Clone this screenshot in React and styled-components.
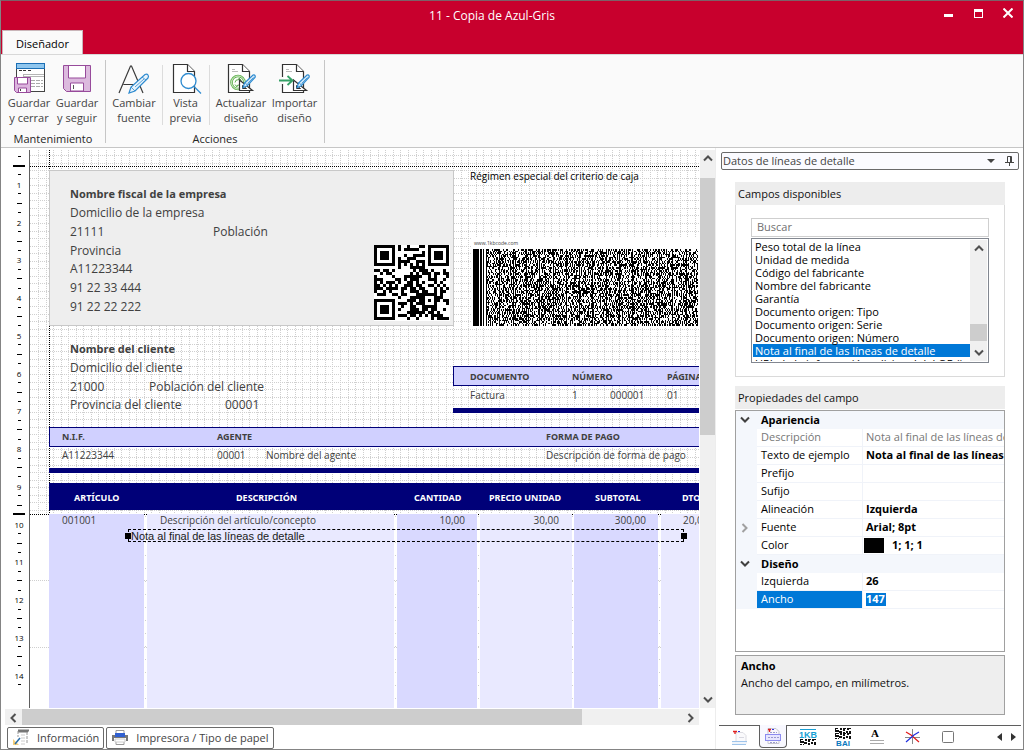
import React from "react";
import styled, { createGlobalStyle, css } from "styled-components";

const UI = '"Open Sans", "Noto Sans", sans-serif';
const NAVY = "#000078";

const Global = createGlobalStyle`
  *, *::before, *::after { box-sizing: border-box; }
  body { margin: 0; background: #fff; font: 11px/15px ${UI}; color: #1c1c1c; }
  button, input, select { font: inherit; color: inherit; margin: 0; padding: 0; border: 0; background: none; border-radius: 0; }
  svg { display: block; }
`;

const Window = styled.div`
  display: flex;
  flex-direction: column;
  height: 100vh;
  min-height: 600px;
  border: 1px solid #848484;
  border-top-color: #7d6068;
  background: #fff;
`;

/* Title bar */
const TitleBar = styled.header`
  display: flex;
  align-items: center;
  height: 29px;
  padding-left: 50px;
  background: #c8002d;
  color: #fff;
`;
const Title = styled.h1`
  flex: 1;
  margin: 0;
  font-size: 12px;
  font-weight: 400;
  text-align: center;
`;
const WindowButton = styled.button`
  display: grid;
  place-items: center;
  width: 30px;
  height: 24px;
  align-self: flex-start;
`;
const TabStrip = styled.nav`
  display: flex;
  height: 24px;
  padding-left: 1px;
  background: #c8002d;
`;
const RibbonTab = styled.button`
  width: 81px;
  height: 25px;
  background: #fafafa;
  border: 1px solid #c9b5b9;
  border-bottom: 0;
  color: #000;
`;

/* Ribbon */
const Ribbon = styled.section`
  display: flex;
  flex: none;
  height: 94px;
  padding: 5px 0 4px 4px;
  background: #fafafa;
  border-top: 1px solid #d8d8d8;
  border-bottom: 1px solid #c6c6c6;
`;
const RibbonGroup = styled.div`
  display: flex;
  flex-direction: column;
  justify-content: space-between;
  padding-right: 4px;
  padding-left: ${(p) => (p.$inset ? "4px" : "0")};
  border-right: 1px solid #c6c6c6;
`;
const RibbonButtons = styled.div`
  display: flex;
  padding-top: 2px;
`;
const GroupName = styled.div`
  text-align: center;
  line-height: 8px;
  color: #262626;
`;
const ToolButton = styled.button`
  display: flex;
  flex-direction: column;
  align-items: center;
  width: ${(p) => p.$width}px;
  color: #444;
  white-space: nowrap;
`;
const ToolLabel = styled.span`
  padding-top: 1px;
  white-space: pre-line;
  text-align: center;
`;
const ToolDivider = styled.span`
  width: 1px;
  height: 60px;
  margin: 3px 3px 0 4px;
  background: #dcdcdc;
`;

/* Main split */
const Workspace = styled.main`
  display: flex;
  flex: 1;
  min-height: 0;
`;
const Designer = styled.section`
  display: flex;
  flex-direction: column;
  flex: 1;
  min-width: 0;
  padding-top: 2px;
`;
const CanvasRow = styled.div`
  display: flex;
  flex: 1;
  min-height: 0;
`;
const RulerBox = styled.div`
  width: 29px;
  overflow: hidden;
  border-right: 1px solid #5f5f5f;
`;
const Canvas = styled.div`
  position: relative;
  flex: 1;
  min-width: 0;
  overflow: hidden;
  background: #fff;
  border-right: 1px solid #fff;
`;
const GridDrawing = styled.svg`
  width: 100%;
  height: 100%;
`;

/* Objects placed on the report canvas */
const Shape = styled.div`
  position: absolute;
  left: ${(p) => p.$x}px;
  top: ${(p) => p.$y}px;
  height: ${(p) => p.$h}px;
  ${(p) => (p.$w ? css`width: ${p.$w}px;` : css`right: 0;`)}
`;
const CompanyBox = styled(Shape)`
  background: #eeeeee;
  border: 1px solid #c8c8c8;
`;
const HeadBand = styled(Shape)`
  background: #d0d0ff;
  border: 1px solid ${NAVY};
  border-right: 0;
`;
const SolidBand = styled(Shape)`
  background: ${NAVY};
`;
const ColumnBand = styled(Shape)`
  height: auto;
  bottom: 0;
  background: ${(p) => (p.$dark ? "#d9d9ff" : "#e9e9ff")};
`;
const Field = styled.span`
  position: absolute;
  top: ${(p) => p.$y - 8}px;
  left: ${(p) => p.$x}px;
  line-height: 16px;
  white-space: nowrap;
  color: #404040;
  font-size: 10px;
`;
const PartyField = styled(Field)`
  font-size: 12px;
`;
const PartyName = styled(Field)`
  font-size: 11px;
  font-weight: 700;
`;
const BandField = styled(Field)`
  font: 700 9px/16px "Noto Sans", sans-serif;
`;
const ColumnTitle = styled(BandField)`
  color: #fff;
`;
const Regime = styled(Field)`
  color: #000;
`;
const Amount = styled(Field)`
  left: ${(p) => p.$x - 60}px;
  width: 60px;
  text-align: right;
`;
const CodeCaption = styled(Field)`
  font-size: 5px;
`;
const CodeDrawing = styled.svg`
  position: absolute;
  left: ${(p) => p.$x}px;
  top: ${(p) => p.$y}px;
`;
const SelectedField = styled.div`
  position: absolute;
  left: 98px;
  top: 379px;
  width: 556px;
  height: 13px;
  padding-left: 2px;
  border: 1px dashed #000;
  font: 11px/12px "Liberation Sans", Arial, sans-serif;
  color: #1a1a1a;
`;
const Handle = styled.i`
  position: absolute;
  top: 3px;
  ${(p) => p.$side}: -4px;
  width: 6px;
  height: 6px;
  background: #000;
`;

/* Scroll bars */
const VBar = styled.div`
  display: flex;
  flex-direction: column;
  width: ${(p) => p.$width}px;
  background: #f0f0f0;
`;
const HBar = styled.div`
  display: flex;
  flex: none;
  height: 17px;
  margin: 0 16px 0 4px;
  background: #f0f0f0;
  border-top: 1px solid #fff;
`;
const ArrowButton = styled.button`
  display: grid;
  place-items: center;
  flex: none;
  min-width: 15px;
  height: 17px;
`;
const SideArrowButton = styled(ArrowButton)`
  width: 17px;
`;
const Track = styled.div`
  display: flex;
  flex: 1;
  flex-direction: ${(p) => (p.$vertical ? "column" : "row")};
`;
const Space = styled.div`
  flex: ${(p) => p.$share} 0 0;
`;
const Thumb = styled.div`
  flex: ${(p) => p.$share} 0 0;
  background: #cdcdcd;
`;

/* Bottom document tabs */
const DocTabs = styled.div`
  display: flex;
  flex: none;
  gap: 2px;
  padding: 2px 0 0 6px;
  height: 24px;
`;
const DocTab = styled.button`
  display: flex;
  align-items: center;
  gap: 8px;
  height: 22px;
  padding: 0 4px 2px 5px;
  border: 1px solid #6a6a6a;
  border-radius: 2px;
  color: #444;
`;

/* Side panel */
const Side = styled.aside`
  display: flex;
  flex-direction: column;
  flex: none;
  width: 308px;
  padding-top: 4px;
  border-left: 1px solid #ededed;
`;
const PanelPicker = styled.div`
  display: flex;
  align-items: center;
  height: 18px;
  margin: 0 4px 12px 5px;
  border: 1px solid #6a6a6a;
  border-radius: 2px;
  background: #fbfbff;
`;
const PanelSelect = styled.select`
  flex: 1;
  height: 16px;
  padding-left: 1px;
  appearance: none;
  color: #444;
  line-height: 16px;
`;
const IconButton = styled.button`
  display: grid;
  place-items: center;
  width: 18px;
  height: 16px;
`;
const PanelBody = styled.div`
  display: flex;
  flex-direction: column;
  flex: 1;
  min-height: 0;
  padding: 0 18px 10px 19px;
`;
const SectionTitle = styled.h2`
  flex: none;
  margin: 0;
  padding-left: 3px;
  font-size: 11px;
  font-weight: 400;
  line-height: 23px;
  color: #111;
  background: #ededed;
`;
const FieldsBox = styled.div`
  display: flex;
  flex-direction: column;
  flex: none;
  gap: 1px;
  padding: 13px 15px;
  margin-bottom: 9px;
  border: 1px solid #dadada;
  border-top: 0;
`;
const SearchBox = styled.input`
  width: 100%;
  height: 19px;
  padding: 0 0 2px 5px;
  border: 1px solid #cfcfcf;
  background: #fff;
  &::placeholder { color: #707070; opacity: 1; }
`;
const ListFrame = styled.div`
  display: flex;
  height: 125px;
  padding: 1px;
  border: 1px solid #828790;
`;
const List = styled.ul`
  flex: 1;
  margin: 0;
  padding: 0;
  overflow: hidden;
  list-style: none;
`;
const ListItem = styled.li`
  height: 13px;
  padding-left: 2px;
  line-height: 13px;
  white-space: nowrap;
  color: ${(p) => (p.$selected ? "#fff" : "#000")};
  background: ${(p) => (p.$selected ? "#0078d7" : "transparent")};
`;
const PropertyFrame = styled.div`
  flex: 1;
  min-height: 0;
  margin: 1px 0 3px;
  overflow: hidden;
  border: 1px solid #a0a0a0;
`;
const PropertyTable = styled.table`
  width: 100%;
  table-layout: fixed;
  border-spacing: 0;
  color: #000;
`;
const Gutter = styled.td`
  width: 21px;
  height: 18px;
  padding: 0 0 0 4px;
  background: #f4f7fc;
`;
const GroupCell = styled.th`
  padding: 0 4px 1px;
  text-align: left;
  line-height: 17px;
  background: #f4f7fc;
`;
const NameCell = styled.th`
  width: 105px;
  height: 18px;
  padding: 0 0 1px 4px;
  text-align: left;
  font-weight: 400;
  line-height: 16px;
  border-bottom: 1px solid #f0f3f9;
  color: ${(p) => (p.$active ? "#fff" : p.$muted ? "#777" : "#000")};
  background: ${(p) => (p.$active ? "#0078d7" : "#fff")};
`;
const ValueCell = styled.td`
  height: 18px;
  padding: 0 0 1px 3px;
  overflow: hidden;
  white-space: nowrap;
  line-height: 16px;
  border-left: 1px solid #f0f3f9;
  border-bottom: 1px solid #f0f3f9;
  font-weight: ${(p) => (p.$muted ? 400 : 700)};
  color: ${(p) => (p.$muted ? "#777" : "#000")};
`;
const ColorValue = styled.span`
  display: flex;
  align-items: center;
  gap: 8px;
  margin-left: -2px;
`;
const Swatch = styled.i`
  width: 20px;
  height: 15px;
  background: #010101;
`;
const ValueInput = styled.input`
  display: block;
  width: 20px;
  height: 13px;
  font-weight: 700;
  color: #fff;
  background: #0078d7;
`;
const HelpBox = styled.div`
  flex: none;
  height: 60px;
  padding: 1px 5px;
  border: 1px solid #a0a0a0;
  background: #eeeeee;
  line-height: 17px;
  color: #111;
`;
const HelpTitle = styled.strong`
  display: block;
  color: #000;
`;
const ToolTabs = styled.div`
  display: flex;
  flex: none;
  height: 24px;
  margin: 0 2px 0 3px;
  padding-left: 3px;
  box-shadow: inset 0 1px #5f5f5f;
`;
const ToolTab = styled.button`
  display: grid;
  place-items: center;
  width: ${(p) => (p.$active ? 28 : 35)}px;
  height: ${(p) => (p.$active ? 23 : 24)}px;
  margin: ${(p) => (p.$active ? "0 3px 0 2px" : "0")};
  ${(p) =>
    p.$active &&
    css`
      background: #f8f8ff;
      border: 1px solid #5f5f5f;
      border-top: 0;
      border-radius: 0 0 4px 4px;
    `}
`;
const TabScroller = styled.div`
  display: flex;
  margin-left: auto;
  padding-right: 1px;
`;
const StepButton = styled.button`
  display: grid;
  place-items: center;
  width: 14px;
  height: 24px;
`;

/* ---------- Drawings ---------- */
const Chevron = ({ dir, color = "#505050" }) => {
  const d = { up: "M1 6.500l4-4 4 4", down: "M1 2.500l4 4 4-4", left: "M6.500 1l-4 4 4 4", right: "M2.500 1l4 4-4 4" }[dir];
  return (
    <svg width="10" height="10" viewBox="0 0 10 10" fill="none" stroke={color} strokeWidth="2" aria-hidden="true">
      <path d={d} />
    </svg>
  );
};

const Pencil = () => (
  <>
    <path d="M14.500 18v10.500h13z" fill="#fff" stroke="#333" strokeWidth="1.200" />
    <path d="M17.500 23.500v3h4z" fill="#fff" stroke="#333" />
    <path d="M18 25.500l1.500-4.500 8.500-8q1.500-.5 2 .5t0 2L22 24z" fill="#d5eaf9" stroke="#2e8bd0" strokeWidth="1.200" />
    <path d="M20 20.500l2.500 3M22.500 21.500l6-6" stroke="#2e8bd0" strokeWidth=".8" />
  </>
);
const Page = ({ x = 3.5 }) => (
  <g transform={`translate(${x} 2.500)`} fill="#fff" stroke="#333" strokeWidth="1.200">
    <path d="M0 0h14l7 7v21H0z" />
    <path d="M14 0v7h7" />
  </g>
);
const Floppy = () => (
  <>
    <path d="M2.500 3.500h27v26h-24l-3-3z" fill="#dcbade" stroke="#974b9b" />
    <path d="M7.500 4v12h17V4" fill="#fff" stroke="#974b9b" />
    <path d="M9.500 29v-8h13v8z" fill="#fff" stroke="#974b9b" />
    <path d="M12.500 23v4" stroke="#555" />
  </>
);
const TOOL_ICONS = {
  saveClose: (
    <>
      <rect x="3.500" y="4.500" width="28" height="25" fill="#fff" stroke="#444" />
      <rect x="3.500" y="1.500" width="28" height="5" fill="#8fc6ee" stroke="#1b6fb5" />
      <path d="M10 12.500h21M10 14.500h21M10.500 12v3" stroke="#b5b5b5" />
      <path d="M6 8.500h3M10 8.500h3M15 8.500h3" stroke="#333" />
      <path d="M18 18.500h12M18 21.500h12M18 24.500h12" stroke="#aaa" strokeDasharray="4 1" />
      <path d="M1.500 15.500h16v15h-14l-2-2z" fill="#dcb4de" stroke="#974b9b" />
      <path d="M4.500 16v6h10v-6M5.500 30v-4h8v4" fill="#fff" stroke="#974b9b" />
      <path d="M7.500 27v2" stroke="#444" />
    </>
  ),
  save: <Floppy />,
  font: (
    <>
      <path d="M1 31L12.500 4h1L25 31M5.500 22.500h15" fill="none" stroke="#3a3a3a" strokeWidth="1.200" />
      <path d="M11 31l2-6L27 12.500q2-1 3 .5t0 3L17 29z" fill="#e8f3fb" stroke="#2e8bd0" strokeWidth="1.200" />
      <path d="M13 25l4 4M24 15l4 3M17 25l9-8" stroke="#2e8bd0" strokeWidth=".8" />
    </>
  ),
  preview: (
    <>
      <Page />
      <circle cx="18.500" cy="19" r="7.500" fill="#fff" stroke="#2e8bd0" strokeWidth="1.300" />
      <path d="M24 24.500l7 7" stroke="#2e8bd0" strokeWidth="1.300" />
    </>
  ),
  update: (
    <>
      <Page />
      <path d="M7 7.500h3M7 9.500h6" stroke="#bbb" />
      <circle cx="13" cy="20.500" r="6.500" fill="#fff" stroke="#5fb04f" strokeWidth="2.600" />
      <circle cx="13" cy="20.500" r="6.500" fill="none" stroke="#d8f0d0" strokeWidth="1" />
      <path d="M10 20.500q0-3 4-3v-1.500l2.500 2.500M16 20.500q0 3-4 3v1.500l-2-2.500" fill="none" stroke="#5fb04f" />
      <Pencil />
    </>
  ),
  import: (
    <>
      <Page />
      <path d="M7 7.500h3M7 9.500h6" stroke="#bbb" />
      <path d="M0 15h5v7H0z" fill="#fafafa" />
      <Pencil />
      <path d="M0 18.500h13M8.500 14l5 4.500-5 4.500" fill="none" stroke="#35a066" strokeWidth="1.800" />
    </>
  ),
};
const ToolIcon = ({ name }) => (
  <svg width="32" height="32" viewBox="0 0 32 32" overflow="visible" aria-hidden="true">
    {TOOL_ICONS[name]}
  </svg>
);

const UNIT = 37.75;
const LABELS = 14;
const Ruler = () => {
  const marks = [];
  for (let i = -1; i < LABELS; i++) {
    const y = 15 + i * UNIT;
    marks.push(
      <g key={i}>
        {i !== 0 && <rect x="16" y={Math.round(y)} width="5" height="1" />}
        <rect x="17" y={Math.round(y + UNIT / 4)} width="3" height="1" />
        <rect x="17" y={Math.round(y + (3 * UNIT) / 4)} width="3" height="1" />
        {i >= 0 && (
          <text x="18" y={Math.round(y + UNIT / 2) + 4} textAnchor="middle" fontSize="8" fontFamily={UI}>
            {i + 1}
          </text>
        )}
      </g>
    );
  }
  return (
    <svg width="28" height="557" shapeRendering="crispEdges" aria-label="Regla">
      <rect x="12" y="15" width="12" height="2" />
      <rect x="12" y="363" width="12" height="2" />
      {marks}
    </svg>
  );
};

const range = (n) => Array.from({ length: n }, (_, i) => i);
const Grid = () => (
  <GridDrawing shapeRendering="crispEdges" aria-hidden="true">
    <g stroke="#cfcfcf" strokeDasharray="1 1">
      {range(200).map((i) => {
        const x = Math.round(8 + i * 7.55) + 0.5;
        return <line key={i} x1={x} x2={x} y1="0" y2="364" />;
      })}
      {range(48).map((i) => {
        const y = Math.round(5 + i * 7.55) + 0.5;
        return <line key={i} x1="0" x2="100%" y1={y} y2={y} />;
      })}
      {[430, 497, 564, 631].map((y) => (
        <line key={y} x1="0" x2="100%" y1={y + 0.5} y2={y + 0.5} />
      ))}
    </g>
    <g stroke="#cfcfcf" strokeDasharray="1 12">
      {[115, 365, 448, 542, 629].map((x) => (
        <line key={x} x1={x + 0.5} x2={x + 0.5} y1="366" y2="100%" />
      ))}
    </g>
    <g stroke="#000" strokeDasharray="1 1">
      <line x1="0" x2="100%" y1="16.500" y2="16.500" />
      <line x1="0" x2="100%" y1="364.500" y2="364.500" />
      <line x1="19.500" x2="19.500" y1="0" y2="364" />
    </g>
  </GridDrawing>
);

const noise = (seed) => {
  let s = seed;
  return () => {
    s = (s * 1103515245 + 12345) % 2147483648;
    return s / 2147483648;
  };
};

const qrPath = (() => {
  const rnd = noise(77);
  const finder = (r, c) => {
    const d = Math.max(Math.abs(r - 3), Math.abs(c - 3));
    return d === 3 || d <= 1;
  };
  let d = "";
  for (let r = 0; r < 25; r++) {
    for (let c = 0; c < 25; c++) {
      const random = rnd() < 0.52;
      let on = random;
      if (r < 8 && c < 8) on = r < 7 && c < 7 && finder(r, c);
      else if (r < 8 && c > 16) on = r < 7 && c > 17 && finder(r, c - 18);
      else if (r > 16 && c < 8) on = r > 17 && c < 7 && finder(r - 18, c);
      else if (r === 6 || c === 6) on = (r + c) % 2 === 0;
      else if (Math.abs(r - 18) <= 2 && Math.abs(c - 18) <= 2) {
        on = Math.max(Math.abs(r - 18), Math.abs(c - 18)) !== 1;
      }
      if (on) d += `M${c * 3} ${r * 3}h3v3h-3z`;
    }
  }
  return d;
})();

const densePath = (() => {
  const rnd = noise(4242);
  let d = "M0 0h6v77h-6zM7 0h2v77h-2zM10 0h1v77h-1z";
  const starts = new Set(range(17).map((i) => 13 + Math.round(i * 13.3)));
  for (let row = 0; row < 51; row++) {
    const y = Math.round(row * 1.5);
    const h = Math.round((row + 1) * 1.5) - y;
    let on = false;
    for (let x = 13; x < 225; x++) {
      if (starts.has(x)) on = true;
      else if (rnd() < 0.58) on = !on;
      if (on) d += `M${x} ${y}h1v${h}h-1z`;
    }
  }
  return d;
})();

const TAB_ICONS = {
  header: (
    <>
      <path d="M5 4.500h7l3 3v8H5z" fill="#fafafc" stroke="#dcdce2" />
      <path d="M2 3.500h4M4 4v2" stroke="#e02020" strokeWidth="1.300" />
      <path d="M7 3.500h2" stroke="#3333dd" />
      <path d="M1 13.500h15M1 16.500h14" stroke="#9fc4ea" />
      <path d="M1 14h14v2H1z" fill="#eef4fb" />
      <path d="M8 9.500h5" stroke="#d8d8e0" />
    </>
  ),
  detail: (
    <>
      <path d="M3 1.500h8l3 3v12H3z" fill="#f8f8fc" stroke="#c5c5cf" />
      <path d="M3 2.500h3M4.500 3v2" stroke="#e02020" strokeWidth="1.300" />
      <path d="M7 2.500h2" stroke="#3333dd" />
      <rect x="0.500" y="7.500" width="15" height="6" fill="#e6e6ff" stroke="#8c8cf0" />
      <path d="M3 10.500h11M5 5.500h7M5 15.500h7" stroke="#9a9acc" strokeDasharray="2 1" />
    </>
  ),
  line: (
    <>
      <path d="M1 12.500h14M1 15.500h14" stroke="#aaa" />
    </>
  ),
  cross: (
    <>
      <path d="M8.500 1v15M1 9.500h15" stroke="#888" />
      <path d="M2 4l5 3 8 7" fill="none" stroke="#e01818" strokeWidth="1.200" />
      <path d="M15 4l-5 3-8 7" fill="none" stroke="#2030e0" strokeWidth="1.200" />
    </>
  ),
  box: <rect x="3.500" y="3.500" width="11" height="11" rx="1" fill="#fff" stroke="#777" />,
};
const TabIcon = ({ name }) => (
  <svg width="17" height="18" viewBox="0 0 17 18" aria-hidden="true">
    {TAB_ICONS[name]}
  </svg>
);
const CodeStrip = ({ y }) => (
  <path
    transform={`translate(1 ${y})`}
    d="M0 0h3v1h-2v1h3v2h-4zM5 0h2v2h-2zM8 0h3v1h-1v2h-2zM12 0h4v1h-2v1h-2zM4 3h3v2h-3zM0 5h2v1h-2zM8 4h2v2h-2zM11 3h2v2h-2zM14 3h2v3h-2zM3 5h1v1h-1z"
    fill="#111"
  />
);
const DenseCodeIcon = () => (
  <svg width="18" height="18" viewBox="0 0 18 18" aria-hidden="true">
    <path d="M1 1.500h16" stroke="#1a9fd4" />
    <text x="9" y="10" textAnchor="middle" fontSize="9" fontWeight="700" fontFamily="Liberation Sans" fill="#1a9fd4">1KB</text>
    <CodeStrip y={11} />
  </svg>
);
const TicketCodeIcon = () => (
  <svg width="18" height="18" viewBox="0 0 18 18" aria-hidden="true">
    <CodeStrip y={0} />
    <CodeStrip y={5} />
    <text x="9" y="18" textAnchor="middle" fontSize="8" fontWeight="700" fontFamily="Liberation Sans" fill="#0a77bd">BAI</text>
  </svg>
);
const TextLineIcon = () => (
  <svg width="17" height="18" viewBox="0 0 17 18" aria-hidden="true">
    <text x="6" y="9" textAnchor="middle" fontSize="11" fontWeight="700" fontFamily="Liberation Serif">A</text>
    {TAB_ICONS.line}
  </svg>
);
const NoteIcon = () => (
  <svg width="16" height="17" viewBox="0 0 16 17" aria-hidden="true">
    <path d="M5 2.500h10M5 1.500h11" stroke="#777" strokeWidth="2" />
    <path d="M5 2v6M14 3v12" stroke="#999" strokeDasharray="3 1" />
    <path d="M8 6h4M8 9h4M8 12h4M8 15h4" stroke="#ccc" />
    <path d="M0 10l6 6H0z" fill="#f5cf7a" />
    <path d="M2 15l5-6" stroke="#2a6ea8" strokeWidth="1.500" />
  </svg>
);
const PrinterIcon = () => (
  <svg width="16" height="17" viewBox="0 0 16 17" aria-hidden="true">
    <path d="M4 4V1.500h8V4M4 13v2.500h8V13" fill="#fff" stroke="#999" />
    <path d="M0 6h16v6h-2V9H2v3H0z" fill="#777" />
    <rect x="3" y="4" width="10" height="4" fill="#2f5fd0" />
    <path d="M3 10h10v3H3z" fill="#fff" stroke="#ccc" />
  </svg>
);

/* ---------- Data ---------- */
const FIELDS = [
  "Peso total de la línea",
  "Unidad de medida",
  "Código del fabricante",
  "Nombre del fabricante",
  "Garantía",
  "Documento origen: Tipo",
  "Documento origen: Serie",
  "Documento origen: Número",
  "Nota al final de las líneas de detalle",
  "URL de la información adicional del QR (i",
];
const NOTE = "Nota al final de las líneas de detalle";
const APPEARANCE = [
  { name: "Descripción", value: NOTE, muted: true },
  { name: "Texto de ejemplo", value: NOTE },
  { name: "Prefijo", value: "" },
  { name: "Sufijo", value: "" },
  { name: "Alineación", value: "Izquierda" },
  { name: "Fuente", value: "Arial; 8pt", expandable: true },
];
const PARTY = [
  [40, 63, "Domicilio de la empresa"],
  [40, 82, "21111"],
  [183, 82, "Población"],
  [40, 101, "Provincia"],
  [40, 119, "A11223344"],
  [40, 138, "91 22 33 444"],
  [40, 157, "91 22 22 222"],
  [40, 218, "Domicilio del cliente"],
  [40, 237, "21000"],
  [119, 237, "Población del cliente"],
  [40, 255, "Provincia del cliente"],
  [195, 255, "00001"],
];
const BAND_TITLES = [
  [440, 227, "DOCUMENTO"],
  [542, 227, "NÚMERO"],
  [637, 227, "PÁGINA"],
  [32, 287, "N.I.F."],
  [187, 287, "AGENTE"],
  [516, 287, "FORMA DE PAGO"],
];
const VALUES = [
  [440, 245, "Factura"],
  [542, 245, "1"],
  [580, 245, "000001"],
  [637, 245, "01"],
  [32, 305, "A11223344"],
  [187, 305, "00001"],
  [236, 305, "Nombre del agente"],
  [516, 305, "Descripción de forma de pago"],
  [32, 370, "001001"],
  [130, 370, "Descripción del artículo/concepto"],
  [653, 370, "20,00"],
];
const COLUMN_TITLES = [
  [44, "ARTÍCULO"],
  [206, "DESCRIPCIÓN"],
  [384, "CANTIDAD"],
  [459, "PRECIO UNIDAD"],
  [565, "SUBTOTAL"],
  [652, "DTO."],
];
const AMOUNTS = [
  [435, "10,00"],
  [529, "30,00"],
  [616, "300,00"],
];
const COLUMNS = [
  [19, 95, true],
  [117, 247, false],
  [367, 80, true],
  [450, 92, false],
  [544, 84, true],
  [631, 0, false],
];

const Tool = ({ icon, label, width }) => (
  <ToolButton type="button" $width={width}>
    <ToolIcon name={icon} />
    <ToolLabel>{label}</ToolLabel>
  </ToolButton>
);

const VerticalScroll = ({ width, before, size, after }) => (
  <VBar $width={width}>
    <ArrowButton type="button" aria-label="Subir"><Chevron dir="up" /></ArrowButton>
    <Track $vertical>
      <Space $share={before} />
      <Thumb $share={size} />
      <Space $share={after} />
    </Track>
    <ArrowButton type="button" aria-label="Bajar"><Chevron dir="down" /></ArrowButton>
  </VBar>
);

const ReportCanvas = () => (
  <Canvas>
    <Grid />
    <CompanyBox $x={19} $y={20} $w={405} $h={156} />
    <PartyName $x={40} $y={44}>Nombre fiscal de la empresa</PartyName>
    <PartyName $x={40} $y={199}>Nombre del cliente</PartyName>
    {PARTY.map(([x, y, text]) => (
      <PartyField key={text} $x={x} $y={y}>{text}</PartyField>
    ))}
    <CodeDrawing $x={344} $y={95} width="76" height="76" shapeRendering="crispEdges" aria-label="Código QR">
      <rect width="76" height="76" fill="#fff" />
      <path d={qrPath} />
    </CodeDrawing>
    <Regime $x={440} $y={26}>Régimen especial del criterio de caja</Regime>
    <CodeDrawing $x={441} $y={88} width="229" height="90" shapeRendering="crispEdges" aria-label="Código de barras">
      <rect width="229" height="90" fill="#fff" />
      <path d={densePath} transform="translate(2 11)" />
    </CodeDrawing>
    <CodeCaption $x={444} $y={93}>www.1kbcode.com</CodeCaption>
    <HeadBand $x={423} $y={216} $h={20} />
    <SolidBand $x={423} $y={258} $h={5} />
    <HeadBand $x={19} $y={277} $h={20} />
    <SolidBand $x={19} $y={318} $h={5} />
    <SolidBand $x={19} $y={333} $h={27} />
    {COLUMNS.map(([x, w, dark]) => (
      <ColumnBand key={x} $x={x} $y={364} $w={w} $dark={dark} />
    ))}
    {BAND_TITLES.map(([x, y, text]) => (
      <BandField key={text} $x={x} $y={y}>{text}</BandField>
    ))}
    {COLUMN_TITLES.map(([x, text]) => (
      <ColumnTitle key={text} $x={x} $y={348}>{text}</ColumnTitle>
    ))}
    {VALUES.map(([x, y, text]) => (
      <Field key={text + y} $x={x} $y={y}>{text}</Field>
    ))}
    {AMOUNTS.map(([x, text]) => (
      <Amount key={text} $x={x} $y={370}>{text}</Amount>
    ))}
    <SelectedField>
      {NOTE}
      <Handle $side="left" />
      <Handle $side="right" />
    </SelectedField>
  </Canvas>
);

const PropertyRow = ({ name, value, muted, active, expandable }) => (
  <tr>
    <Gutter>{expandable && <Chevron dir="right" color="#a0a0a0" />}</Gutter>
    <NameCell scope="row" $muted={muted} $active={active}>{name}</NameCell>
    <ValueCell $muted={muted}>{value}</ValueCell>
  </tr>
);
const PropertyGroup = ({ name }) => (
  <tr>
    <Gutter><Chevron dir="down" color="#404040" /></Gutter>
    <GroupCell colSpan={2} scope="colgroup">{name}</GroupCell>
  </tr>
);

export default function App() {
  return (
    <Window>
      <Global />
      <TitleBar>
        <Title>11 - Copia de Azul-Gris</Title>
        <WindowButton type="button" aria-label="Minimizar">
          <svg width="9" height="9"><rect y="5" width="9" height="3" fill="#fff" /></svg>
        </WindowButton>
        <WindowButton type="button" aria-label="Maximizar">
          <svg width="9" height="9"><path d="M0 0h9v9h-9zM1 3v5h7v-5z" fill="#fff" fillRule="evenodd" /></svg>
        </WindowButton>
        <WindowButton type="button" aria-label="Cerrar">
          <svg width="10" height="10"><path d="M0.500 0.500l9 9M9.500 0.500l-9 9" stroke="#fff" strokeWidth="2" /></svg>
        </WindowButton>
      </TitleBar>
      <TabStrip>
        <RibbonTab type="button">Diseñador</RibbonTab>
      </TabStrip>
      <Ribbon>
        <RibbonGroup>
          <RibbonButtons>
            <Tool icon="saveClose" width={48} label={"Guardar\ny cerrar"} />
            <Tool icon="save" width={48} label={"Guardar\ny seguir"} />
          </RibbonButtons>
          <GroupName>Mantenimiento</GroupName>
        </RibbonGroup>
        <RibbonGroup $inset>
          <RibbonButtons>
            <Tool icon="font" width={48} label={"Cambiar\nfuente"} />
            <ToolDivider />
            <Tool icon="preview" width={39} label={"Vista\nprevia"} />
            <ToolDivider />
            <Tool icon="update" width={56} label={"Actualizar\ndiseño"} />
            <Tool icon="import" width={51} label={"Importar\ndiseño"} />
          </RibbonButtons>
          <GroupName>Acciones</GroupName>
        </RibbonGroup>
      </Ribbon>
      <Workspace>
        <Designer>
          <CanvasRow>
            <RulerBox><Ruler /></RulerBox>
            <ReportCanvas />
            <VerticalScroll width={15} before={11} size={256} after={256} />
          </CanvasRow>
          <HBar>
            <SideArrowButton type="button" aria-label="Izquierda"><Chevron dir="left" /></SideArrowButton>
            <Track>
              <Thumb $share={560} />
              <Space $share={100} />
            </Track>
            <SideArrowButton type="button" aria-label="Derecha"><Chevron dir="right" /></SideArrowButton>
          </HBar>
          <DocTabs>
            <DocTab type="button"><NoteIcon />Información</DocTab>
            <DocTab type="button"><PrinterIcon />Impresora / Tipo de papel</DocTab>
          </DocTabs>
        </Designer>
        <Side>
          <PanelPicker>
            <PanelSelect aria-label="Panel">
              <option>Datos de líneas de detalle</option>
            </PanelSelect>
            <IconButton type="button" aria-label="Abrir">
              <svg width="8" height="4"><path d="M0 0h8l-4 4z" fill="#444" /></svg>
            </IconButton>
            <IconButton type="button" aria-label="Fijar">
              <svg width="9" height="10" fill="none" stroke="#444"><path d="M2.500 6V0.500h4V6M5.500 0v6M0 6.500h9M4.500 7v3" /></svg>
            </IconButton>
          </PanelPicker>
          <PanelBody>
            <SectionTitle>Campos disponibles</SectionTitle>
            <FieldsBox>
              <SearchBox type="text" placeholder="Buscar" aria-label="Buscar" />
              <ListFrame>
                <List role="listbox" aria-label="Campos disponibles">
                  {FIELDS.map((name) => (
                    <ListItem key={name} role="option" aria-selected={name === NOTE} $selected={name === NOTE}>
                      {name}
                    </ListItem>
                  ))}
                </List>
                <VerticalScroll width={17} before={67} size={17} after={3} />
              </ListFrame>
            </FieldsBox>
            <SectionTitle>Propiedades del campo</SectionTitle>
            <PropertyFrame>
              <PropertyTable>
                <colgroup>
                  <col width="21" />
                  <col width="105" />
                  <col />
                </colgroup>
                <tbody>
                  <PropertyGroup name="Apariencia" />
                  {APPEARANCE.map((row) => (
                    <PropertyRow key={row.name} {...row} />
                  ))}
                  <PropertyRow name="Color" value={<ColorValue><Swatch />1; 1; 1</ColorValue>} />
                  <PropertyGroup name="Diseño" />
                  <PropertyRow name="Izquierda" value="26" />
                  <PropertyRow name="Ancho" active value={<ValueInput type="text" aria-label="Ancho" defaultValue="147" />} />
                </tbody>
              </PropertyTable>
            </PropertyFrame>
            <HelpBox>
              <HelpTitle>Ancho</HelpTitle>
              Ancho del campo, en milímetros.
            </HelpBox>
          </PanelBody>
          <ToolTabs>
            <ToolTab type="button" aria-label="Cabecera"><TabIcon name="header" /></ToolTab>
            <ToolTab type="button" aria-label="Detalle" $active><TabIcon name="detail" /></ToolTab>
            <ToolTab type="button" aria-label="Código 1KB"><DenseCodeIcon /></ToolTab>
            <ToolTab type="button" aria-label="Código BAI"><TicketCodeIcon /></ToolTab>
            <ToolTab type="button" aria-label="Texto"><TextLineIcon /></ToolTab>
            <ToolTab type="button" aria-label="Líneas"><TabIcon name="cross" /></ToolTab>
            <ToolTab type="button" aria-label="Rectángulo"><TabIcon name="box" /></ToolTab>
            <TabScroller>
              <StepButton type="button" aria-label="Anterior"><svg width="5" height="8"><path d="M5 0v8l-5-4z" fill="#333" /></svg></StepButton>
              <StepButton type="button" aria-label="Siguiente"><svg width="5" height="8"><path d="M0 0v8l5-4z" fill="#333" /></svg></StepButton>
            </TabScroller>
          </ToolTabs>
        </Side>
      </Workspace>
    </Window>
  );
}
